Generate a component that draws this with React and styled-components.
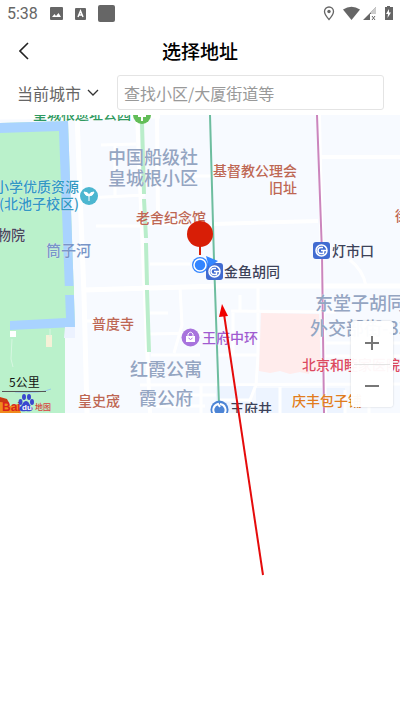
import React from 'react';
import styled, { createGlobalStyle } from 'styled-components';

const GlobalStyle = createGlobalStyle`
  * {
    box-sizing: border-box;
  }
  body {
    margin: 0;
    background: #fff;
    font-family: 'Noto Sans CJK SC', sans-serif;
  }
  button, select, input {
    font: inherit;
    margin: 0;
  }
`;

const Page = styled.div`
  position: relative;
  min-height: 100vh;
`;

const StatusBar = styled.div`
  display: flex;
  align-items: center;
  justify-content: space-between;
  height: 27px;
  padding: 0 7px;
  font-family: Roboto, sans-serif;
  font-size: 16px;
  color: #666;
`;

const StatusGroup = styled.div`
  display: flex;
  align-items: center;
  gap: ${props => props.$gap}px;
`;

const Header = styled.header`
  display: grid;
  grid-template-columns: 48px 1fr 48px;
  align-items: center;
  height: 47px;
`;

const BackButton = styled.button`
  display: flex;
  align-items: center;
  justify-content: center;
  height: 46px;
  padding: 0;
  border: 0;
  background: none;
`;

const Title = styled.h1`
  margin: 0;
  font-size: 19px;
  line-height: 28px;
  font-weight: 500;
  text-align: center;
  color: #000;
`;

const SearchRow = styled.form`
  display: flex;
  align-items: center;
  gap: 18px;
  padding: 1px 16px 5px 17px;
`;

const CityPicker = styled.label`
  display: flex;
  align-items: center;
  gap: 6px;
  flex: none;
  color: #666;
`;

const CitySelect = styled.select`
  appearance: none;
  width: 64px;
  height: 32px;
  padding: 0;
  border: 0;
  background: none;
  font-size: 16px;
  color: #666;
`;

const SearchInput = styled.input`
  flex: 1;
  min-width: 0;
  height: 35px;
  padding: 0 6px;
  border: 1px solid #e4e4e4;
  border-radius: 3px;
  background: #fff;
  font-size: 16px;
  color: #333;

  &::placeholder {
    color: #999;
    opacity: 1;
  }
`;

const MapView = styled.section`
  position: relative;
  height: 298px;
  overflow: hidden;
  background: #f7faff;
`;

const MapDrawing = styled.svg`
  display: block;
  width: 100%;
  height: 100%;
`;

const Label = styled.span`
  position: absolute;
  left: ${props => props.$x}px;
  top: ${props => props.$y}px;
  font-size: ${props => props.$size || 14}px;
  line-height: ${props => props.$line || 20}px;
  font-weight: 500;
  text-align: right;
  white-space: pre;
  color: ${props => props.$color};
  text-shadow: 0 0 1px #fff;
`;

const Marker = styled.svg`
  position: absolute;
  left: ${props => props.$x}px;
  top: ${props => props.$y}px;
  overflow: visible;
`;

const Scale = styled.div`
  position: absolute;
  left: 2px;
  bottom: 21px;
  width: 44px;
  padding-left: 7px;
  border-bottom: 1px solid #555;
  font-size: 12px;
  line-height: 19px;
  color: #111;
`;

const ZoomControls = styled.div`
  position: absolute;
  right: 7px;
  bottom: 6px;
  width: 42px;
  padding: 0 3px;
  border-radius: 3px;
  background: rgba(255, 255, 255, 0.96);
  box-shadow: 0 0 2px rgba(0, 0, 0, 0.2);
`;

const ZoomButton = styled.button`
  display: flex;
  align-items: center;
  justify-content: center;
  width: 100%;
  height: 43px;
  padding: 0;
  border: 0;
  background: none;

  & + & {
    border-top: 1px solid #e4e4e4;
  }
`;

const Pointer = styled.svg`
  position: absolute;
  left: 216px;
  top: 302px;
  pointer-events: none;
`;

const BROWN = '#bd6754';
const AREA = '#94a5c2';
const STATION = '#3c4259';

const labels = [
  { text: '皇城根遗址公园', x: 33, y: -12, color: '#2f9960' },
  { text: '中国船级社\n皇城根小区', x: 108, y: 31, color: AREA, size: 18, line: 21 },
  { text: '基督教公理会\n旧址', x: 213, y: 47, color: BROWN, line: 17 },
  { text: '小学优质资源\n(北池子校区)', x: -5, y: 63, color: '#3398c2', line: 17 },
  { text: '物院', x: -3, y: 109, color: '#464a5b' },
  { text: '筒子河', x: 46, y: 125, color: '#7895c8', size: 15 },
  { text: '老舍纪念馆', x: 136, y: 92, color: BROWN },
  { text: '街', x: 395, y: 90, color: BROWN },
  { text: '灯市口', x: 332, y: 125, color: STATION },
  { text: '金鱼胡同', x: 224, y: 146, color: STATION },
  { text: '东堂子胡同', x: 315, y: 177, color: AREA, size: 18 },
  { text: '外交部街-33', x: 310, y: 202, color: AREA, size: 18 },
  { text: '普度寺', x: 92, y: 198, color: BROWN },
  { text: '王府中环', x: 202, y: 212, color: '#a05bd0' },
  { text: '红霞公寓', x: 130, y: 243, color: AREA, size: 18 },
  { text: '北京和睦家医院', x: 302, y: 239, color: '#dc4961' },
  { text: '霞公府', x: 139, y: 272, color: AREA, size: 18 },
  { text: '皇史宬', x: 78, y: 275, color: BROWN },
  { text: '庆丰包子铺', x: 292, y: 275, color: '#e07c20' },
  { text: '王府井', x: 230, y: 283, color: STATION },
];

const Terrain = () => (
  <MapDrawing viewBox="0 0 400 298" preserveAspectRatio="xMinYMin slice" aria-hidden="true">
    {/* moat and palace park */}
    <path d="M0 8L68 6L75 211L65 211L65 298H0Z" fill="#baf1cb" />
    <path d="M0 8L68 6L75 212L10 215L10 206L66 203L59 16L0 18Z" fill="#a9d3ff" />
    <path d="M64 171H74V180H65ZM64 215H70V220H64Z" fill="#baf1cb" />
    <path d="M65 212H75V223H64Z" fill="#ecf2ff" />
    <path d="M10 216H16V222H10ZM0 282L8 286V298H0Z" fill="#fff" />
    <path d="M46 220H52V232H46Z" fill="#f5f1d7" />
    <path d="M12 224L11 244L13 252M50 214V222" fill="none" stroke="#d7f7e1" />
    <path d="M15 277Q40 279 51 274" fill="none" stroke="#97cbe7" />
    {/* blocks */}
    <path d="M216 270H254L245 298H216ZM256 273H345V298H256Z" fill="#edf4ff" />
    {/* roads */}
    <g fill="none" stroke="#fff" strokeWidth="4">
      <path d="M0 2L160 1M77 0L84 180L87 298M84 175L220 171L400 171" strokeWidth="5" />
      <path d="M137 0L150 298M157 0L158 105" />
      <path d="M101 30L136 29M115 30V82M85 83L145 80M96 111H140M143 109L206 109M193 61H212" strokeWidth="3" />
      <path d="M214 109L318 106M318 42H400M319 0L325 298" strokeWidth="4" />
      <path d="M87 206H94M150 149H190M150 198H168M147 219L205 218M180 172L182 210L174 238M151 240H200M140 270L400 269M216 240H258M258 171V240M231 196L336 197M233 196V240M201 270V298M150 280H216M258 240L256 270L250 285L220 285M280 272V298M369 270V298M150 291H205" strokeWidth="3" />
      <path d="M350 145Q363 155 366 171M326 228H400M326 241H400M345 275V298M240 180V196" strokeWidth="3" />
    </g>
    <path d="M261 198L319 199L321 256L310 255L309 259L300 257L290 259L280 256L270 258L259 256Z" fill="#ffecec" />
    <g fill="none" stroke="#b9edca" strokeWidth="4">
      <path d="M142 8L144 79M144 84L146 123M146 128L147 170M147 175L149 237" />
    </g>
    {/* subway lines */}
    <path d="M210 0L214 145L219 290" fill="none" stroke="#6dbd9f" strokeWidth="2" />
    <path d="M317 0L322 138L324 298" fill="none" stroke="#cb85bd" strokeWidth="2" />
  </MapDrawing>
);

const SubwaySign = ({ x, y }) => (
  <Marker $x={x} $y={y} width="17" height="17" viewBox="0 0 17 17">
    <rect width="17" height="17" rx="3" fill="#416bd1" />
    <circle cx="8.500" cy="8.500" r="5.500" fill="none" stroke="#fff" strokeWidth="1.500" />
    <path d="M10 5.500H8A3 3 0 0 0 8 11.500H10.500V8.500H8M10.500 8.500H14" fill="none" stroke="#fff" strokeWidth="1.500" />
  </Marker>
);

const BaiduLogo = () => (
  <Marker $x={0} $y={278} width="52" height="20" viewBox="0 0 52 20">
    <path d="M0 5L8 8L10 13L18 11L21 20H0Z" fill="#f08a1c" />
    <path d="M0 4L7 6L9 10L0 9Z" fill="#c93a12" />
    <text x="2" y="18" fontSize="12" fontWeight="700" fontFamily="Liberation Sans, sans-serif" fill="#d8231d">Bai</text>
    <g fill="#3a48cf">
      <ellipse cx="20.500" cy="9" rx="2" ry="3" />
      <ellipse cx="24" cy="4" rx="2" ry="3" />
      <ellipse cx="29" cy="4" rx="2" ry="3" />
      <ellipse cx="32" cy="9" rx="2" ry="3" />
      <path d="M26 8C29 8 29 12 32 14C34 18 30 19 26 18C22 19 18 18 20 14C23 12 23 8 26 8Z" />
    </g>
    <text x="22" y="17" fontSize="8" fontWeight="700" fontFamily="Liberation Sans, sans-serif" fill="#fff">du</text>
    <text x="35" y="17" fontSize="8" fontWeight="500" fontFamily="Noto Sans CJK SC, sans-serif" fill="#d8423c">地图</text>
  </Marker>
);

const StatusIcons = () => (
  <StatusBar>
    <StatusGroup $gap={12}>
      <span>5:38</span>
      <svg width="13" height="13" viewBox="0 0 13 13">
        <rect width="13" height="13" rx="1" fill="#666" />
        <path d="M2 10L4.500 7L6 9L8.500 6L11 10Z" fill="#fff" />
      </svg>
      <svg width="11" height="12" viewBox="0 0 11 12">
        <rect width="11" height="12" rx="1" fill="#666" />
        <path d="M3 9L5.500 3L8 9M4 7H7" fill="none" stroke="#fff" strokeWidth="1.500" />
      </svg>
      <svg width="17" height="17" viewBox="0 0 17 17">
        <rect width="17" height="17" rx="2" fill="#666" />
      </svg>
    </StatusGroup>
    <StatusGroup $gap={8}>
      <svg width="12" height="15" viewBox="0 0 12 15">
        <path d="M6 1A4.500 4.500 0 0 0 1.500 5.500C1.500 8.500 6 13.500 6 13.500S10.500 8.500 10.500 5.500A4.500 4.500 0 0 0 6 1Z" fill="none" stroke="#666" strokeWidth="1.300" />
        <circle cx="6" cy="5.500" r="1.700" fill="#666" />
      </svg>
      <svg width="50" height="15" viewBox="0 0 50 15">
        <path d="M0 3.500Q8.500-2 17 3.500L8.500 14Z" fill="#666" />
        <path d="M20 14L33 1V8H27V14Z" fill="#666" />
        <path d="M28 6L33 1V8H28Z" fill="#ccc" />
        <path d="M29 10L32 14M32 10L29 14" stroke="#666" />
        <path d="M42 1H44V0H47V1H50V14H42Z" fill="#666" />
        <path d="M46 3L43 8H45L44.500 12L48 6.500H46Z" fill="#fff" />
      </svg>
    </StatusGroup>
  </StatusBar>
);

const App = () => (
  <Page>
    <GlobalStyle />
    <StatusIcons />
    <Header>
      <BackButton type="button" aria-label="返回">
        <svg width="10" height="18" viewBox="0 0 10 18">
          <path d="M9 1L1 9L9 17" fill="none" stroke="#222" strokeWidth="1.600" />
        </svg>
      </BackButton>
      <Title>选择地址</Title>
    </Header>
    <SearchRow>
      <CityPicker>
        <CitySelect aria-label="当前城市">
          <option>当前城市</option>
        </CitySelect>
        <svg width="12" height="8" viewBox="0 0 12 8">
          <path d="M1 1L6 6L11 1" fill="none" stroke="#333" strokeWidth="1.300" />
        </svg>
      </CityPicker>
      <SearchInput type="text" aria-label="查找地址" placeholder="查找小区/大厦街道等" />
    </SearchRow>
    <MapView>
      <Terrain />
      {labels.map(l => (
        <Label key={l.text} $x={l.x} $y={l.y} $color={l.color} $size={l.size} $line={l.line}>
          {l.text}
        </Label>
      ))}
      <Marker $x={133} $y={-9} width="18" height="18" viewBox="0 0 18 18">
        <circle cx="9" cy="9" r="9" fill="#62bd58" />
        <path d="M9 5V15M5 10H13" stroke="#fff" strokeWidth="2" />
      </Marker>
      <Marker $x={80} $y={72} width="18" height="18" viewBox="0 0 18 18">
        <circle cx="9" cy="9" r="9" fill="#4cb6d0" />
        <path d="M9 14V9Q5 9 4 5Q8 5 9 8Q10 5 14 5Q13 9 9 9" fill="#fff" stroke="#fff" />
      </Marker>
      <Marker $x={181} $y={213} width="19" height="19" viewBox="0 0 19 19">
        <circle cx="9.500" cy="9.500" r="9" fill="#a873dd" />
        <path d="M5 8H14V14H5Z" fill="#fff" />
        <path d="M7 8V6Q9.500 2.500 12 6V8" fill="none" stroke="#fff" />
        <path d="M7.500 10Q9.500 13 11.500 10" fill="none" stroke="#a873dd" />
      </Marker>
      <Marker $x={210} $y={285} width="19" height="19" viewBox="0 0 19 19">
        <circle cx="9.500" cy="9.500" r="9" fill="#4c84d5" />
        <path d="M5 14A6 6 0 0 1 8 4L10 7M10 4A6 6 0 0 1 14 14" fill="none" stroke="#fff" strokeWidth="2" />
      </Marker>
      <SubwaySign x={206} y={148} />
      <SubwaySign x={313} y={127} />
      <Marker $x={186} $y={105} width="34" height="54" viewBox="0 0 34 54">
        <path d="M13 24H15V35H13Z" fill="#d81e06" />
        <circle cx="14" cy="14" r="13" fill="#d81e06" />
        <path d="M20 36L32 41L23 47Z" fill="#3385ff" />
        <circle cx="14" cy="45" r="8" fill="#3385ff" />
        <circle cx="14" cy="45" r="6" fill="none" stroke="#fff" strokeWidth="1.500" />
      </Marker>
      <Scale>5公里</Scale>
      <BaiduLogo />
      <ZoomControls>
        <ZoomButton type="button" aria-label="放大">
          <svg width="16" height="16" viewBox="0 0 16 16">
            <path d="M8 1V15M1 8H15" stroke="#777" strokeWidth="2" />
          </svg>
        </ZoomButton>
        <ZoomButton type="button" aria-label="缩小">
          <svg width="16" height="16" viewBox="0 0 16 16">
            <path d="M1 8H15" stroke="#777" strokeWidth="2" />
          </svg>
        </ZoomButton>
      </ZoomControls>
    </MapView>
    <Pointer width="52" height="276" viewBox="0 0 52 276" aria-hidden="true">
      <path d="M8 12L47 273" stroke="#e50b0b" strokeWidth="2" />
      <path d="M6 2L12 14L3 15Z" fill="#f00000" />
    </Pointer>
  </Page>
);

export default App;
